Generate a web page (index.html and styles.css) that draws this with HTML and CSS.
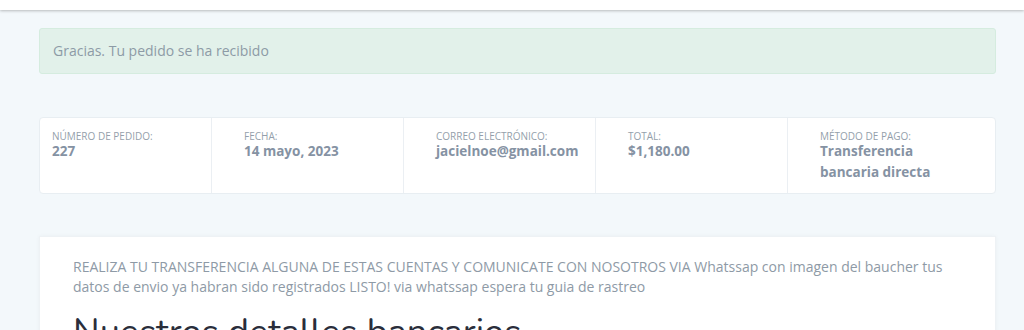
FILE: index.html
```html
<!DOCTYPE html>
<html lang="es">
<head>
<meta charset="UTF-8">
<meta name="viewport" content="width=device-width, initial-scale=1.0">
<title>Pedido recibido</title>
<link rel="stylesheet" href="styles.css">
</head>
<body>

<div class="topbar"></div>

<div class="container">
  <p class="notice">Gracias. Tu pedido se ha recibido</p>

  <ul class="overview">
    <li class="col">
      <span class="label">Número de pedido:</span>
      <strong>227</strong>
    </li>
    <li class="col">
      <span class="label">Fecha:</span>
      <strong>14 mayo, 2023</strong>
    </li>
    <li class="col">
      <span class="label">Correo electrónico:</span>
      <strong>jacielnoe@gmail.com</strong>
    </li>
    <li class="col">
      <span class="label">Total:</span>
      <strong>$1,180.00</strong>
    </li>
    <li class="col">
      <span class="label">Método de pago:</span>
      <strong>Transferencia bancaria directa</strong>
    </li>
  </ul>

  <div class="card">
    <p class="instructions">REALIZA TU TRANSFERENCIA ALGUNA DE ESTAS CUENTAS Y COMUNICATE CON NOSOTROS VIA Whatssap con imagen del baucher tus datos de envio ya habran sido registrados LISTO! via whatssap espera tu guia de rastreo</p>
    <h2>Nuestros detalles bancarios</h2>
  </div>
</div>

</body>
</html>
```

FILE: styles.css
```css
body {
  font-family: "Open Sans", Arial, sans-serif;
  background-color: #f3f8fb;
  margin: 0;
  padding: 0;
  color: #8c99a6;
}

.topbar {
  height: 10px;
  background-color: #fff;
  box-shadow: 0 1px 3px rgba(0, 0, 0, 0.25);
}

.container {
  margin: 18px 28px 0 39px;
}

.notice {
  margin: 0;
  padding: 12px 13px;
  height: 20px;
  line-height: 20px;
  font-size: 14px;
  background-color: #e2f1ea;
  border: 1px solid #d5ecdf;
  border-radius: 3px;
  color: #8d9ba6;
}

.overview {
  list-style: none;
  margin: 43px 0 0;
  padding: 0;
  display: grid;
  grid-template-columns: 171px 192px 192px 192px 1fr;
  background-color: #fff;
  border: 1px solid #e8eef2;
  border-radius: 4px;
  height: 77px;
  box-sizing: border-box;
}

.col {
  padding: 11px 20px 0 32px;
  border-left: 1px solid #ebeff3;
}

.col:first-child {
  padding-left: 12px;
  border-left: none;
}

.label {
  display: block;
  font-size: 10px;
  line-height: 14px;
  text-transform: uppercase;
  color: #949fab;
}

.col strong {
  display: block;
  margin-top: -2px;
  font-size: 13.5px;
  line-height: 21px;
  color: #8592a3;
}

.card {
  margin-top: 42px;
  background-color: #fff;
  border: 1px solid #eef2f5;
  box-shadow: 0 0 4px rgba(0, 0, 0, 0.04);
  padding: 20px 33px 0;
  height: 120px;
}

.instructions {
  margin: 0;
  font-size: 14px;
  line-height: 20px;
  color: #8e9aa6;
}

h2 {
  margin: 16px 0 0;
  font-family: "Nunito", "Open Sans", Arial, sans-serif;
  font-size: 36px;
  font-weight: 400;
  line-height: 40px;
  color: #2a2e3b;
}
```
